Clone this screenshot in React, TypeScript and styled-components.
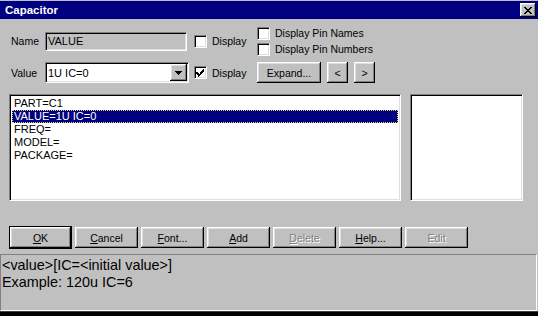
import React from "react";
import styled, { createGlobalStyle, css } from "styled-components";

const GlobalStyle = createGlobalStyle`
	html, body {
		margin: 0;
		padding: 0;
		background: #c0c0c0;
	}
	* {
		box-sizing: border-box;
	}
`;

const raised = css`
	background: #c0c0c0;
	box-shadow: inset -1px -1px #000, inset 1px 1px #fff, inset -2px -2px #808080, inset 2px 2px #dfdfdf;
`;

const sunken = css`
	border: 1px solid;
	border-color: #808080 #fff #fff #808080;
	box-shadow: inset 1px 1px #000, inset -1px -1px #dfdfdf;
`;

const Window = styled.div`
	width: 538px;
	height: 316px;
	background: #c0c0c0;
	display: flex;
	flex-direction: column;
	padding-top: 1px;
	font-family: "Liberation Sans", Arial, sans-serif;
	font-size: 10.5px;
	color: #000;
	overflow: hidden;
`;

const TitleBar = styled.div`
	height: 18px;
	background: #000080;
	display: flex;
	align-items: center;
	justify-content: space-between;
	padding: 0 2px 0 5px;
`;

const Title = styled.span`
	color: #fff;
	font-weight: bold;
	font-size: 11.5px;
`;

const CloseButton = styled.div`
	${raised};
	width: 16px;
	height: 14px;
	display: flex;
	align-items: center;
	justify-content: center;
`;

const TopGrid = styled.div`
	display: grid;
	grid-template-columns: 34px 149px 63px 1fr;
	grid-template-rows: 32px 21px;
	row-gap: 5px;
	align-items: center;
	margin-top: 6px;
	padding-left: 11px;
`;

const Label = styled.span`
	font-size: 10.5px;
`;

const Field = styled.div<{ $width: number; $white?: boolean }>`
	${sunken};
	width: ${(p) => p.$width}px;
	height: ${(p) => (p.$white ? 21 : 19)}px;
	background: ${(p) => (p.$white ? "#fff" : "#c0c0c0")};
	display: flex;
	align-items: center;
	justify-content: space-between;
	padding: 0 0 0 2px;
	font-size: 11px;
`;

const DropButton = styled.div`
	${raised};
	width: 17px;
	height: 17px;
	margin-right: 1px;
	display: flex;
	align-items: center;
	justify-content: center;
`;

const CheckRow = styled.label`
	display: flex;
	align-items: center;
	gap: 5px;
	height: 13px;
`;

const CheckBox = styled.span`
	${sunken};
	width: 13px;
	height: 13px;
	background: #fff;
	display: flex;
	align-items: center;
	justify-content: center;
`;

const PinStack = styled.div`
	display: flex;
	flex-direction: column;
	gap: 3px;
`;

const ButtonGroup = styled.div`
	display: flex;
	align-items: center;
	gap: 6px;
`;

const Button = styled.div<{ $width: number; $default?: boolean; $disabled?: boolean }>`
	${raised};
	width: ${(p) => p.$width}px;
	height: ${(p) => (p.$default ? 23 : 21)}px;
	display: flex;
	align-items: center;
	justify-content: center;
	font-size: 10.5px;
	color: ${(p) => (p.$disabled ? "#808080" : "#000")};
	text-shadow: ${(p) => (p.$disabled ? "1px 1px 0 #fff" : "none")};
	${(p) =>
		p.$default &&
		css`
			border: 1px solid #000;
		`}
`;

const ListArea = styled.div`
	display: flex;
	gap: 9px;
	margin-top: 11px;
	padding-left: 9px;
	height: 107px;
`;

const ListBox = styled.div<{ $width: number }>`
	${sunken};
	width: ${(p) => p.$width}px;
	height: 100%;
	background: #fff;
	padding: 2px;
	font-size: 11px;
`;

const ListRow = styled.div<{ $selected?: boolean }>`
	height: 13px;
	line-height: 11px;
	padding-left: 1px;
	border: 1px solid transparent;
	white-space: nowrap;
	${(p) =>
		p.$selected &&
		css`
			background: #000080;
			color: #fff;
			border: 1px dotted #d8d870;
		`}
`;

const ButtonRow = styled.div`
	display: flex;
	align-items: center;
	gap: 3px;
	margin-top: 25px;
	padding-left: 9px;
	height: 23px;
`;

const HelpPanel = styled.div`
	margin-top: 5px;
	margin-right: 1px;
	height: 57px;
	border: 1px solid;
	border-color: #808080 #fff #fff #808080;
	padding: 2px 0 0 1px;
	font-size: 14.4px;
	line-height: 17px;
`;

const BottomEdge = styled.div`
	flex: 1;
	background: #000;
	border-top: 1px solid #404040;
`;

const Check = () => (
	<svg width="9" height="9" viewBox="0 0 9 9" shapeRendering="crispEdges">
		<path d="M1 3h1v1h1v1h1V3h1V2h1V1h1V0h1v3h-1v1h-1v1h-1v1h-1v1h-1v1h-1V7H2V6H1V5H0V3z" fill="#000" transform="translate(0,1)" />
	</svg>
);

const rows = ["PART=C1", "VALUE=1U IC=0", "FREQ=", "MODEL=", "PACKAGE="];

const App: React.FC = () => {
	return (
		<>
			<GlobalStyle />
			<Window>
				<TitleBar>
					<Title>Capacitor</Title>
					<CloseButton>
						<svg width="8" height="7" viewBox="0 0 8 7" shapeRendering="crispEdges">
							<path d="M0 0h2v1h1v1h2V1h1V0h2v1H7v1H6v1H5v1h1v1h1v1h1v1H6V6H5V5H3v1H2v1H0V6h1V5h1V4h1V3H2V2H1V1H0z" fill="#000" />
						</svg>
					</CloseButton>
				</TitleBar>

				<TopGrid>
					<Label>Name</Label>
					<Field $width={142}>VALUE</Field>
					<CheckRow>
						<CheckBox />
						<Label>Display</Label>
					</CheckRow>
					<PinStack>
						<CheckRow>
							<CheckBox />
							<Label>Display Pin Names</Label>
						</CheckRow>
						<CheckRow>
							<CheckBox />
							<Label>Display Pin Numbers</Label>
						</CheckRow>
					</PinStack>

					<Label>Value</Label>
					<Field $width={144} $white>
						1U IC=0
						<DropButton>
							<svg width="7" height="4" viewBox="0 0 7 4" shapeRendering="crispEdges">
								<path d="M0 0h7v1H6v1H5v1H4v1H3V3H2V2H1V1H0z" fill="#000" />
							</svg>
						</DropButton>
					</Field>
					<CheckRow>
						<CheckBox>
							<Check />
						</CheckBox>
						<Label>Display</Label>
					</CheckRow>
					<ButtonGroup>
						<Button $width={64}>Expand...</Button>
						<Button $width={21}>&lt;</Button>
						<Button $width={21}>&gt;</Button>
					</ButtonGroup>
				</TopGrid>

				<ListArea>
					<ListBox $width={392}>
						{rows.map((r, i) => (
							<ListRow key={r} $selected={i === 1}>
								{r}
							</ListRow>
						))}
					</ListBox>
					<ListBox $width={113} />
				</ListArea>

				<ButtonRow>
					<Button $width={63} $default>
						<u>O</u>K
					</Button>
					<Button $width={63}>
						<u>C</u>ancel
					</Button>
					<Button $width={63}>
						<u>F</u>ont...
					</Button>
					<Button $width={63}>
						<u>A</u>dd
					</Button>
					<Button $width={63} $disabled>
						<u>D</u>elete
					</Button>
					<Button $width={63}>
						<u>H</u>elp...
					</Button>
					<Button $width={63} $disabled>
						Edit
					</Button>
				</ButtonRow>

				<HelpPanel>
					&lt;value&gt;[IC=&lt;initial value&gt;]
					<br />
					Example: 120u IC=6
				</HelpPanel>
				<BottomEdge />
			</Window>
		</>
	);
};

export default App;
